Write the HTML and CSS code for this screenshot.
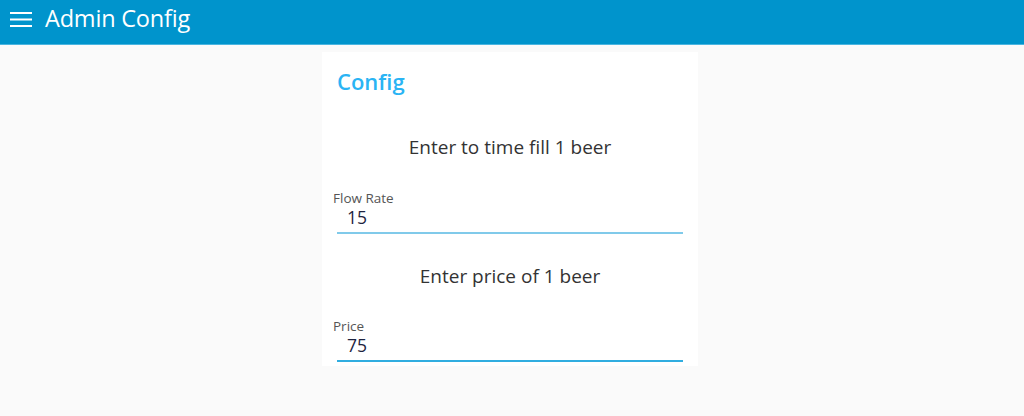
FILE: index.html
```html
<!DOCTYPE html>
<html>
<head>
<meta charset="utf-8">
<link rel="stylesheet" href="styles.css">
</head>
<body>
<header class="topbar">
  <svg class="menu" width="22" height="15" viewBox="0 0 22 15">
    <rect x="0" y="0" width="22" height="2" fill="#fff"/>
    <rect x="0" y="6.5" width="22" height="2" fill="#fff"/>
    <rect x="0" y="13" width="22" height="2" fill="#fff"/>
  </svg>
  <span class="title">Admin Config</span>
</header>
<main class="page">
  <section class="card">
    <h2 class="card-title">Config</h2>
    <p class="prompt prompt-first">Enter to time fill 1 beer</p>
    <div class="field field-first">
      <label class="label">Flow Rate</label>
      <div class="value value-first">15</div>
    </div>
    <p class="prompt prompt-second">Enter price of 1 beer</p>
    <div class="field field-second">
      <label class="label">Price</label>
      <div class="value value-second">75</div>
    </div>
  </section>
</main>
</body>
</html>
```
FILE: styles.css
```css
* { box-sizing: border-box; }
html, body { margin: 0; padding: 0; }
body {
  background: #fafafa;
  font-family: "Open Sans", "Noto Sans", sans-serif;
  width: 1024px;
  height: 416px;
  overflow: hidden;
}
.topbar {
  height: 45px;
  background: #0094cc;
  border-bottom: 1px solid #4ab5e0;
  display: flex;
  align-items: flex-start;
  padding-left: 10px;
}
.menu { display: block; margin-top: 12px; }
.title {
  color: #fff;
  font-size: 23.5px;
  line-height: 30px;
  margin-top: 3px;
  margin-left: 13px;
  letter-spacing: -0.2px;
}
.page {
  display: flex;
  justify-content: center;
  padding-top: 7px;
  padding-right: 4px;
}
.card {
  width: 376px;
  height: 314px;
  background: #fff;
  padding: 0 15px 0 11px;
  overflow: hidden;
}
.card-title {
  margin: 14px 0 0 4px;
  color: #2ab4f4;
  font-size: 22px;
  font-weight: 600;
  line-height: 30px;
}
.prompt {
  margin: 0;
  text-align: center;
  font-size: 19px;
  color: #333;
  line-height: 24px;
  padding-left: 4px;
}
.prompt-first { margin-top: 39px; }
.prompt-second { margin-top: 30px; }
.field-first { margin-top: 32px; }
.field-second { margin-top: 31px; }
.label {
  display: block;
  font-size: 13.5px;
  color: #555;
  line-height: 15px;
}
.value {
  margin-left: 4px;
  padding: 1px 0 5px 10px;
  font-size: 17.5px;
  color: #1d2440;
  line-height: 20px;
}
.value-first { border-bottom: 2px solid #80caea; }
.value-second { border-bottom: 2px solid #30ade0; }
```
